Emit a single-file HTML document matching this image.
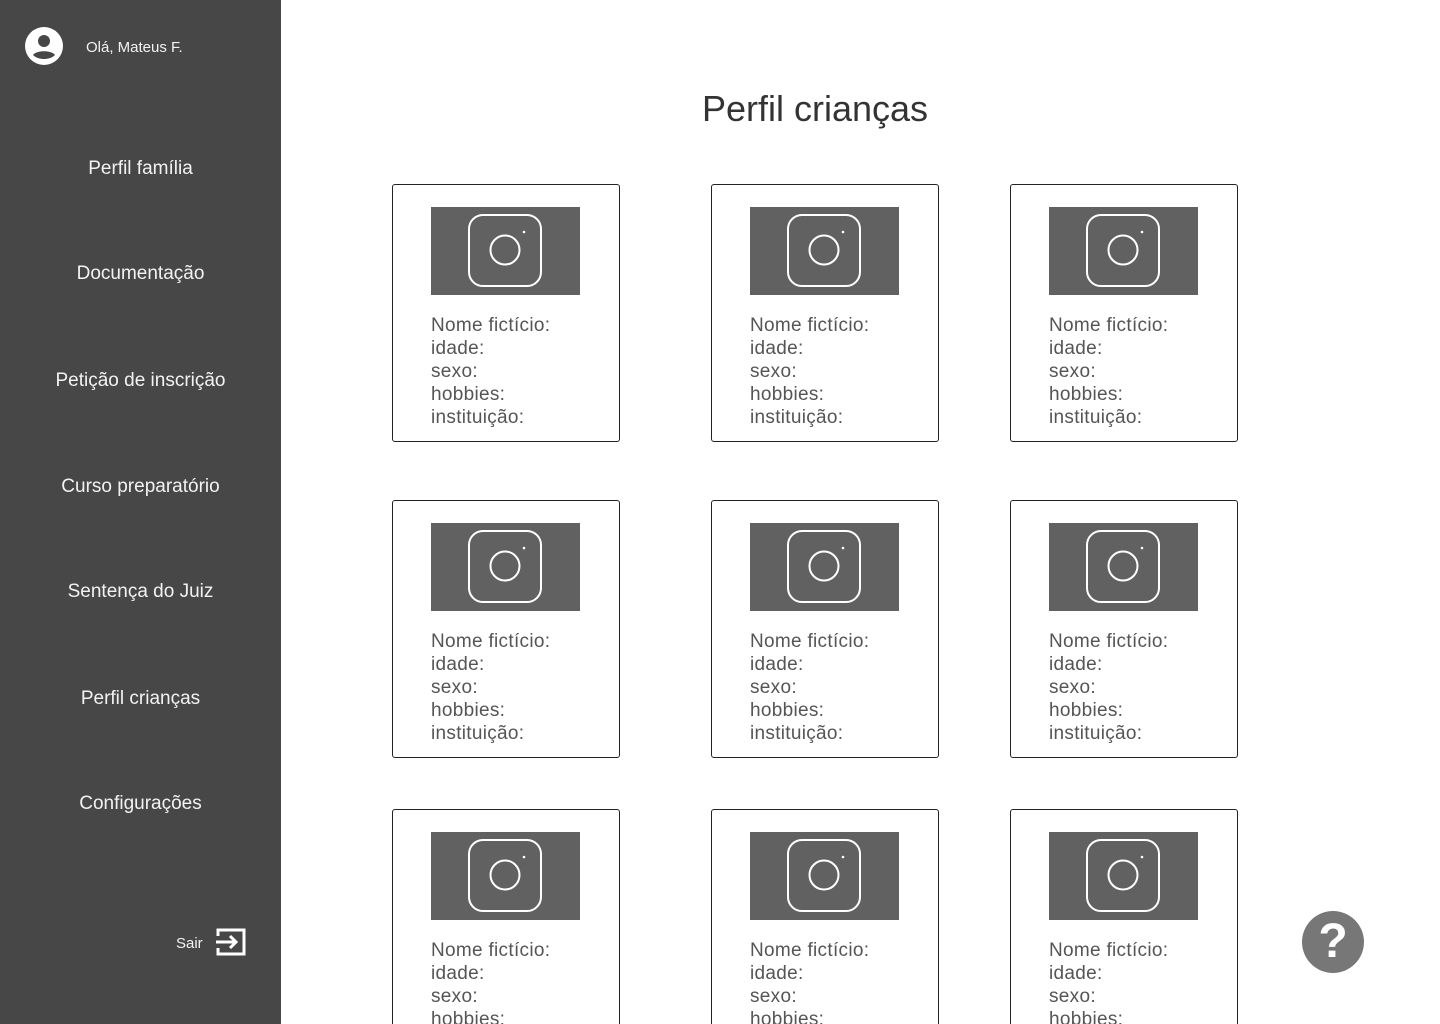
<!DOCTYPE html>
<html style="width:1440px;height:1024px;overflow:hidden"><head><meta charset="utf-8"><style>
*{margin:0;padding:0;box-sizing:border-box}
body{width:1440px;height:1024px;overflow:hidden;background:#fff;font-family:"Liberation Sans",Roboto,sans-serif;position:relative}
.side{position:absolute;left:0;top:0;width:281px;height:1024px;background:#474747;color:#fff}
.nav{position:absolute;left:0;width:281px;text-align:center;font-size:19px;color:#f2f2f2}
h1{position:absolute;left:600px;width:430px;text-align:center;top:88px;font-size:36px;font-weight:400;color:#333}
.card{position:absolute;width:228px;height:258px;border:1px solid #222;border-radius:3px;background:#fff;overflow:hidden}
.img{position:absolute;left:38px;top:22px;width:149px;height:88px;background:#616161}
.img svg{position:absolute;left:37px;top:7px}
.txt{position:absolute;left:38px;top:129px;font-size:19px;line-height:23px;color:#555;letter-spacing:0.3px}
.help{position:absolute;left:1302px;top:911px;width:62px;height:62px;border-radius:50%;background:#777;color:#fff;font-size:48px;font-weight:700;text-align:center;line-height:62px}
</style></head><body>
<div class="side">
  <svg style="position:absolute;left:25px;top:27px" width="38" height="38" viewBox="0 0 38 38"><circle cx="19" cy="19" r="19" fill="#fff"/><circle cx="19" cy="14" r="6" fill="#474747"/><path d="M8 28c3-5 19-5 22 0c-3 3-7 4-11 4s-8-1-11-4z" fill="#474747"/></svg>
  <div style="position:absolute;left:86px;top:39px;font-size:15px;color:#f2f2f2">Olá, Mateus F.</div>
  <div class="nav" style="top:158px">Perfil família</div>
  <div class="nav" style="top:263px">Documentação</div>
  <div class="nav" style="top:370px">Petição de inscrição</div>
  <div class="nav" style="top:476px">Curso preparatório</div>
  <div class="nav" style="top:581px">Sentença do Juiz</div>
  <div class="nav" style="top:688px">Perfil crianças</div>
  <div class="nav" style="top:793px">Configurações</div>
  <div style="position:absolute;left:176px;top:935px;font-size:15px;color:#f2f2f2">Sair</div>
  <svg style="position:absolute;left:216px;top:927px" width="30" height="30" viewBox="0 0 30 30" fill="none" stroke="#fff" stroke-width="3"><path d="M2 9V3h26v24H2v-6"/><path d="M0 15h20M14 9l6 6-6 6"/></svg>
</div>
<h1>Perfil crianças</h1>

<div class="card" style="left:392px;top:184px"><div class="img"><svg width="74" height="74" viewBox="0 0 74 74"><rect x="1" y="1" width="72" height="71" rx="14" fill="none" stroke="#fff" stroke-width="2"/><circle cx="37" cy="36" r="14.5" fill="none" stroke="#fff" stroke-width="2"/><circle cx="56" cy="18" r="1.3" fill="#fff"/></svg></div><div class="txt">Nome fictício:<br>idade:<br>sexo:<br>hobbies:<br>instituição:</div></div>
<div class="card" style="left:711px;top:184px"><div class="img"><svg width="74" height="74" viewBox="0 0 74 74"><rect x="1" y="1" width="72" height="71" rx="14" fill="none" stroke="#fff" stroke-width="2"/><circle cx="37" cy="36" r="14.5" fill="none" stroke="#fff" stroke-width="2"/><circle cx="56" cy="18" r="1.3" fill="#fff"/></svg></div><div class="txt">Nome fictício:<br>idade:<br>sexo:<br>hobbies:<br>instituição:</div></div>
<div class="card" style="left:1010px;top:184px"><div class="img"><svg width="74" height="74" viewBox="0 0 74 74"><rect x="1" y="1" width="72" height="71" rx="14" fill="none" stroke="#fff" stroke-width="2"/><circle cx="37" cy="36" r="14.5" fill="none" stroke="#fff" stroke-width="2"/><circle cx="56" cy="18" r="1.3" fill="#fff"/></svg></div><div class="txt">Nome fictício:<br>idade:<br>sexo:<br>hobbies:<br>instituição:</div></div>

<div class="card" style="left:392px;top:500px"><div class="img"><svg width="74" height="74" viewBox="0 0 74 74"><rect x="1" y="1" width="72" height="71" rx="14" fill="none" stroke="#fff" stroke-width="2"/><circle cx="37" cy="36" r="14.5" fill="none" stroke="#fff" stroke-width="2"/><circle cx="56" cy="18" r="1.3" fill="#fff"/></svg></div><div class="txt">Nome fictício:<br>idade:<br>sexo:<br>hobbies:<br>instituição:</div></div>
<div class="card" style="left:711px;top:500px"><div class="img"><svg width="74" height="74" viewBox="0 0 74 74"><rect x="1" y="1" width="72" height="71" rx="14" fill="none" stroke="#fff" stroke-width="2"/><circle cx="37" cy="36" r="14.5" fill="none" stroke="#fff" stroke-width="2"/><circle cx="56" cy="18" r="1.3" fill="#fff"/></svg></div><div class="txt">Nome fictício:<br>idade:<br>sexo:<br>hobbies:<br>instituição:</div></div>
<div class="card" style="left:1010px;top:500px"><div class="img"><svg width="74" height="74" viewBox="0 0 74 74"><rect x="1" y="1" width="72" height="71" rx="14" fill="none" stroke="#fff" stroke-width="2"/><circle cx="37" cy="36" r="14.5" fill="none" stroke="#fff" stroke-width="2"/><circle cx="56" cy="18" r="1.3" fill="#fff"/></svg></div><div class="txt">Nome fictício:<br>idade:<br>sexo:<br>hobbies:<br>instituição:</div></div>

<div class="card" style="left:392px;top:809px;height:258px"><div class="img"><svg width="74" height="74" viewBox="0 0 74 74"><rect x="1" y="1" width="72" height="71" rx="14" fill="none" stroke="#fff" stroke-width="2"/><circle cx="37" cy="36" r="14.5" fill="none" stroke="#fff" stroke-width="2"/><circle cx="56" cy="18" r="1.3" fill="#fff"/></svg></div><div class="txt">Nome fictício:<br>idade:<br>sexo:<br>hobbies:<br>instituição:</div></div>
<div class="card" style="left:711px;top:809px;height:258px"><div class="img"><svg width="74" height="74" viewBox="0 0 74 74"><rect x="1" y="1" width="72" height="71" rx="14" fill="none" stroke="#fff" stroke-width="2"/><circle cx="37" cy="36" r="14.5" fill="none" stroke="#fff" stroke-width="2"/><circle cx="56" cy="18" r="1.3" fill="#fff"/></svg></div><div class="txt">Nome fictício:<br>idade:<br>sexo:<br>hobbies:<br>instituição:</div></div>
<div class="card" style="left:1010px;top:809px;height:258px"><div class="img"><svg width="74" height="74" viewBox="0 0 74 74"><rect x="1" y="1" width="72" height="71" rx="14" fill="none" stroke="#fff" stroke-width="2"/><circle cx="37" cy="36" r="14.5" fill="none" stroke="#fff" stroke-width="2"/><circle cx="56" cy="18" r="1.3" fill="#fff"/></svg></div><div class="txt">Nome fictício:<br>idade:<br>sexo:<br>hobbies:<br>instituição:</div></div>

<div class="help">?</div>
</body></html>
